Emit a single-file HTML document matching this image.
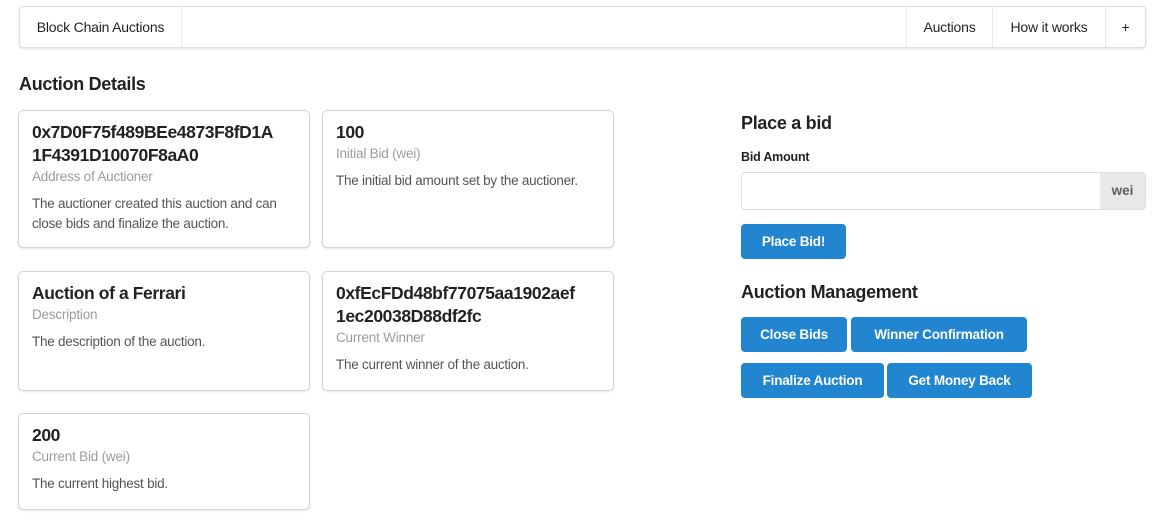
<!DOCTYPE html>
<html><head><meta charset="utf-8"><style>
*{box-sizing:border-box;margin:0;padding:0}
body{width:1159px;height:522px;background:#fff;font-family:"Liberation Sans",sans-serif;color:rgba(0,0,0,.87);position:relative;overflow:hidden;font-size:14px}
.a{position:absolute}
.menu{left:19px;top:6px;width:1127px;height:42px;border:1px solid rgba(34,36,38,.15);border-radius:4px;box-shadow:0 1px 2px rgba(34,36,38,.15)}
.mi{position:absolute;top:0;height:40px;line-height:40px;font-size:14px;text-align:center;border-left:1px solid rgba(34,36,38,.1);letter-spacing:-.2px}
.card{position:absolute;width:290px;border-radius:4px;box-shadow:0 1px 3px #d4d4d5,0 0 0 1px #d4d4d5;padding:10px 13px}
.h{font-weight:bold;font-size:17.5px;line-height:23px;letter-spacing:-.4px;color:rgba(0,0,0,.87);white-space:nowrap}
.m{color:rgba(0,0,0,.4);font-size:13.5px;line-height:20px;letter-spacing:-.2px}
.d{color:rgba(0,0,0,.68);font-size:13.5px;line-height:20px;margin-top:7px;letter-spacing:-.25px}
.btn{position:absolute;height:35px;background:#2185d0;color:#fff;font-weight:bold;font-size:13.5px;line-height:35px;text-align:center;border-radius:4px;letter-spacing:-.2px}
h2{position:absolute;font-size:18px;font-weight:bold;letter-spacing:-.3px}
</style></head><body>
<div class="a menu">
 <div class="mi" style="left:0;width:162px;border-left:none;border-right:1px solid rgba(34,36,38,.1)">Block Chain Auctions</div>
 <div class="mi" style="left:886px;width:86px">Auctions</div>
 <div class="mi" style="left:972px;width:113px">How it works</div>
 <div class="mi" style="left:1085px;width:40px">+</div>
</div>
<h2 style="left:19px;top:74px">Auction Details</h2>
<div class="card" style="left:19px;top:111px;height:136px"><div class="h">0x7D0F75f489BEe4873F8fD1A<br>1F4391D10070F8aA0</div><div class="m">Address of Auctioner</div><div class="d">The auctioner created this auction and can close bids and finalize the auction.</div></div>
<div class="card" style="left:323px;top:111px;height:136px"><div class="h">100</div><div class="m">Initial Bid (wei)</div><div class="d">The initial bid amount set by the auctioner.</div></div>
<div class="card" style="left:19px;top:272px;height:118px"><div class="h">Auction of a Ferrari</div><div class="m">Description</div><div class="d">The description of the auction.</div></div>
<div class="card" style="left:323px;top:272px;height:118px"><div class="h">0xfEcFDd48bf77075aa1902aef<br>1ec20038D88df2fc</div><div class="m">Current Winner</div><div class="d">The current winner of the auction.</div></div>
<div class="card" style="left:19px;top:414px;height:95px"><div class="h">200</div><div class="m">Current Bid (wei)</div><div class="d">The current highest bid.</div></div>

<h2 style="left:741px;top:113px">Place a bid</h2>
<div class="a" style="left:741px;top:150px;font-size:12.5px;font-weight:bold;letter-spacing:-.2px">Bid Amount</div>
<div class="a" style="left:741px;top:172px;width:405px;height:38px;border:1px solid rgba(34,36,38,.15);border-radius:4px;overflow:hidden">
 <div class="a" style="right:0;top:0;width:45px;height:36px;background:#e8e8e8;color:rgba(0,0,0,.6);font-weight:bold;font-size:13.5px;line-height:36px;text-align:center">wei</div>
</div>
<div class="btn" style="left:741px;top:224px;width:105px">Place Bid!</div>
<h2 style="left:741px;top:282px">Auction Management</h2>
<div class="btn" style="left:741px;top:317px;width:106px">Close Bids</div>
<div class="btn" style="left:851px;top:317px;width:176px">Winner Confirmation</div>
<div class="btn" style="left:741px;top:363px;width:143px">Finalize Auction</div>
<div class="btn" style="left:887px;top:363px;width:145px">Get Money Back</div>
</body></html>
